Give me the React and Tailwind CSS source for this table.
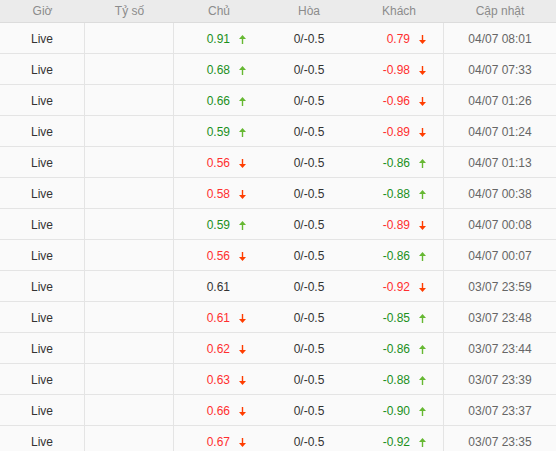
import React from 'react';

const rows = [
  ['0.91', 'up', '0.79', 'down', '04/07 08:01'],
  ['0.68', 'up', '-0.98', 'down', '04/07 07:33'],
  ['0.66', 'up', '-0.96', 'down', '04/07 01:26'],
  ['0.59', 'up', '-0.89', 'down', '04/07 01:24'],
  ['0.56', 'down', '-0.86', 'up', '04/07 01:13'],
  ['0.58', 'down', '-0.88', 'up', '04/07 00:38'],
  ['0.59', 'up', '-0.89', 'down', '04/07 00:08'],
  ['0.56', 'down', '-0.86', 'up', '04/07 00:07'],
  ['0.61', null, '-0.92', 'down', '03/07 23:59'],
  ['0.61', 'down', '-0.85', 'up', '03/07 23:48'],
  ['0.62', 'down', '-0.86', 'up', '03/07 23:44'],
  ['0.63', 'down', '-0.88', 'up', '03/07 23:39'],
  ['0.66', 'down', '-0.90', 'up', '03/07 23:37'],
  ['0.67', 'down', '-0.92', 'up', '03/07 23:35'],
];

function Arrow({ dir }) {
  if (dir === 'up') {
    return (
      <svg width="7" height="9" viewBox="0 0 7 9" className="block">
        <path d="M3.5 0 L7 4 L4.2 4 L4.2 9 L2.8 9 L2.8 4 L0 4 Z" fill="#66b832" />
      </svg>
    );
  }
  return (
    <svg width="7" height="9" viewBox="0 0 7 9" className="block">
      <path d="M3.5 9 L7 5 L4.2 5 L4.2 0 L2.8 0 L2.8 5 L0 5 Z" fill="#ff3d00" />
    </svg>
  );
}

function Odd({ value, dir }) {
  const color = dir === 'up' ? 'text-[#1c901c]' : dir === 'down' ? 'text-[#ff2f2f]' : 'text-[#333]';
  return (
    <div className="flex items-center h-full pt-[2px]">
      <span className={`w-[56px] text-right ${color}`}>{value}</span>
      <span className="ml-[9px] w-[7px]">{dir && <Arrow dir={dir} />}</span>
    </div>
  );
}

export default function App() {
  const cols = 'grid grid-cols-[85px_89px_90px_90px_90px_112px]';
  const line = 'border-[#e4e4e4]';
  return (
    <div className="w-[556px] h-[451px] overflow-hidden bg-[#fafafa] text-[12px] text-[#333]" style={{ fontFamily: 'Tahoma, "Liberation Sans", sans-serif' }}>
      <div className={`${cols} h-[23px] items-center bg-[#ebebeb] border-b border-[#dcdcdc] text-[#8c8c8c] text-center`}>
        <div>Giờ</div>
        <div>Tỷ số</div>
        <div>Chủ</div>
        <div>Hòa</div>
        <div>Khách</div>
        <div>Cập nhật</div>
      </div>
      {rows.map((r, i) => (
        <div key={i} className={`${cols} h-[31px] border-b ${line}`}>
          <div className={`flex items-center justify-center pt-[2px] border-r ${line}`}>Live</div>
          <div className={`border-r ${line}`}></div>
          <Odd value={r[0]} dir={r[1]} />
          <div className="flex items-center justify-center pt-[2px]">0/-0.5</div>
          <div className={`border-r ${line}`}>
            <Odd value={r[2]} dir={r[3]} />
          </div>
          <div className="flex items-center justify-center pt-[2px] text-[#666]">{r[4]}</div>
        </div>
      ))}
    </div>
  );
}
